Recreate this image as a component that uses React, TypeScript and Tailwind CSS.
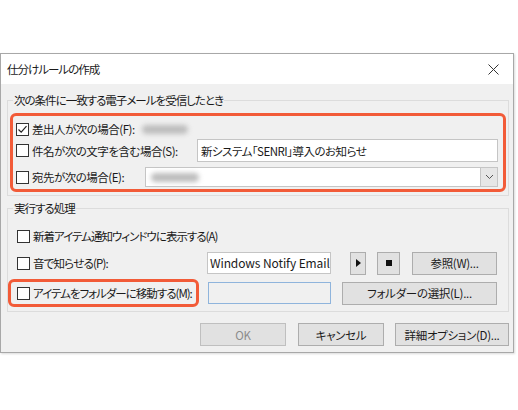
import React from "react";

const font = "font-['Noto_Sans_CJK_JP','Noto_Sans',sans-serif] [font-feature-settings:'palt']";

function CheckBox({ checked = false }: { checked?: boolean }) {
  return (
    <span className="flex h-[13px] w-[13px] shrink-0 items-center justify-center border border-[#333333] bg-white">
      {checked && (
        <svg width="11" height="11" viewBox="0 0 11 11">
          <path d="M1.5 5.5 L4.2 8.2 L9.5 2.2" fill="none" stroke="#222" strokeWidth="1.2" />
        </svg>
      )}
    </span>
  );
}

function Blur({ w }: { w: number }) {
  return (
    <span
      className="block h-[9px] rounded-full bg-[#bdbdbd] blur-[2.5px]"
      style={{ width: w }}
    />
  );
}

function Btn({ children, className = "" }: { children?: React.ReactNode; className?: string }) {
  return (
    <div
      className={`flex h-[23px] items-center justify-center whitespace-nowrap border border-[#adadad] bg-[#e1e1e1] text-[11.5px] tracking-[-0.3px] text-[#1a1a1a] ${className}`}
    >
      {children}
    </div>
  );
}

export default function App() {
  return (
    <div className={`h-[410px] w-[518px] bg-white pt-[53px] text-[11.5px] leading-[16px] tracking-[-0.5px] text-[#1a1a1a] ${font}`}>
      <div className="w-[514px] border border-[#a8a8a8] bg-[#f0f0f0] shadow-[1px_1px_2px_rgba(0,0,0,0.15)]">
        {/* タイトルバー */}
        <div className="flex h-[30px] items-center justify-between bg-white pl-[6px] pr-[14px]">
          <span className="tracking-[-1px]">仕分けルールの作成</span>
          <svg width="11" height="11" viewBox="0 0 11 11">
            <path d="M0.5 0.5 L10.5 10.5 M10.5 0.5 L0.5 10.5" stroke="#333" strokeWidth="1" />
          </svg>
        </div>

        <div className="pb-[6px] pl-[6px] pr-[4px] pt-[8px]">
          {/* 条件 */}
          <fieldset className="border border-[#dcdcdc] pb-[3px]">
            <legend className="ml-[5px] px-[1px] leading-[16px] tracking-[-1px]">次の条件に一致する電子メールを受信したとき</legend>
            <div className="mx-[2px] mt-[5px] rounded-[6px] border-[3px] border-[#f25b38] pb-[2px] pl-[3px] pr-[5px] pt-[3px]">
              <div className="flex h-[20px] items-center">
                <CheckBox checked />
                <span className="ml-[3px]">差出人が次の場合(F):</span>
                <span className="ml-[7px]">
                  <Blur w={46} />
                </span>
              </div>
              <div className="flex h-[23px] items-center justify-between">
                <div className="flex items-center">
                  <CheckBox />
                  <span className="ml-[3px]">件名が次の文字を含む場合(S):</span>
                </div>
                <div className="flex h-[23px] w-[301px] items-center border border-[#c5c5c5] bg-white pl-[3px]">
                  新システム「SENRI」導入のお知らせ
                </div>
              </div>
              <div className="mt-[5px] flex h-[20px] items-center justify-between">
                <div className="flex items-center">
                  <CheckBox />
                  <span className="ml-[3px]">宛先が次の場合(E):</span>
                </div>
                <div className="flex h-[20px] w-[353px] items-center border border-[#c5c5c5] bg-white">
                  <div className="flex-1 pl-[5px]">
                    <Blur w={48} />
                  </div>
                  <div className="flex h-full w-[17px] items-center justify-center border-l border-[#c5c5c5] bg-[#e6e6e6]">
                    <svg width="9" height="6" viewBox="0 0 9 6">
                      <path d="M1 1 L4.5 4.5 L8 1" fill="none" stroke="#555" strokeWidth="1" />
                    </svg>
                  </div>
                </div>
              </div>
            </div>
          </fieldset>

          {/* 処理 */}
          <fieldset className="mt-[4px] border border-[#dcdcdc] pb-[4px]">
            <legend className="ml-[5px] px-[1px] leading-[16px] tracking-[-1px]">実行する処理</legend>
            <div className="mt-[10px] flex h-[20px] items-center pl-[9px]">
              <CheckBox />
              <span className="ml-[3px] tracking-[-1px]">新着アイテム通知ウィンドウに表示する(A)</span>
            </div>
            <div className="mt-[6px] flex h-[22px] items-center">
              <div className="flex w-[199px] items-center pl-[9px]">
                <CheckBox />
                <span className="ml-[3px] tracking-[-0.8px]">音で知らせる(P):</span>
              </div>
              <div className="flex h-[22px] w-[124px] items-center overflow-hidden whitespace-nowrap border border-[#c5c5c5] bg-white pl-[2px] text-[12px] tracking-[-0.1px]">
                Windows Notify Email
              </div>
              <Btn className="ml-[19px] w-[16px]">
                <svg width="5" height="8" viewBox="0 0 5 8">
                  <path d="M0 0 L5 4 L0 8 Z" fill="#111" />
                </svg>
              </Btn>
              <Btn className="ml-[11px] w-[23px]">
                <span className="block h-[6px] w-[6px] bg-[#111]" />
              </Btn>
              <Btn className="ml-[12px] h-[22px] w-[85px]">参照(W)...</Btn>
            </div>
            <div className="mt-[5px] flex h-[28px] items-center">
              <div className="flex h-[28px] w-[191px] items-center whitespace-nowrap rounded-[6px] border-[3px] border-[#f25b38] pl-[6px]">
                <CheckBox />
                <span className="ml-[3px] tracking-[-1px]">アイテムをフォルダーに移動する(M):</span>
              </div>
              <div className="ml-[9px] h-[22px] w-[123px] border border-[#8fb4dc] bg-[#f0f0f0]" />
              <Btn className="ml-[11px] h-[22px] w-[155px]">フォルダーの選択(L)...</Btn>
            </div>
          </fieldset>

          {/* ボタン */}
          <div className="mt-[11px] flex justify-end">
            <Btn className="w-[86px] border-[#bfbfbf] bg-[#cccccc] text-[#8c8c8c]">OK</Btn>
            <Btn className="ml-[12px] w-[86px]">キャンセル</Btn>
            <Btn className="ml-[11px] w-[114px]">詳細オプション(D)...</Btn>
          </div>
        </div>
      </div>
    </div>
  );
}
